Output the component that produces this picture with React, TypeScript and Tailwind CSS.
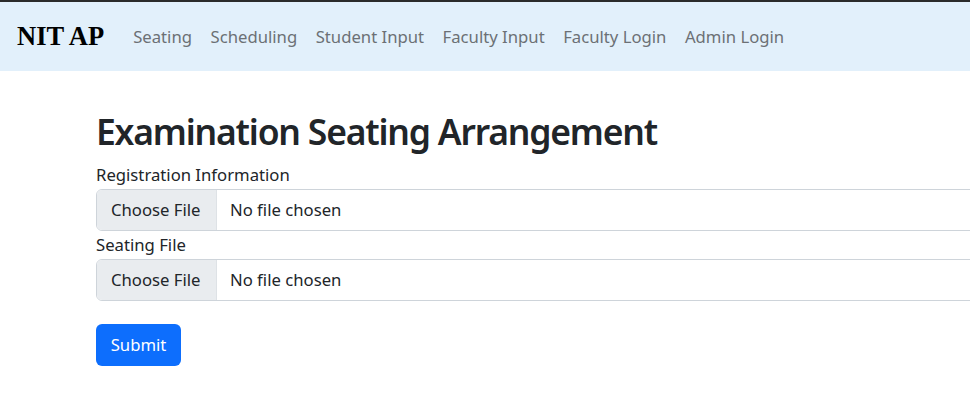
export default function App() {
  const sans = { fontFamily: '"Noto Sans", "Open Sans", sans-serif' };
  const links = ["Seating", "Scheduling", "Student Input", "Faculty Input", "Faculty Login", "Admin Login"];
  const FileInput = () => (
    <div className="flex h-[42px] w-[1000px] rounded-[6px] border border-[#ced4da] overflow-hidden">
      <div className="flex items-center w-[120px] pl-[14px] bg-[#e9ecef] border-r border-[#dee2e6] text-[16.7px] text-[#212529]">Choose File</div>
      <div className="flex items-center pl-[13px] text-[16.7px] text-[#212529]">No file chosen</div>
    </div>
  );
  return (
    <div className="w-[970px] h-[417px] overflow-hidden bg-white" style={sans}>
      <div className="h-[2px] bg-[#2b2b2b]" />
      <nav className="h-[69px] bg-[#e2f0fb] flex items-center">
        <span className="ml-[17px] text-[26.5px] font-bold text-black leading-none" style={{ fontFamily: '"Liberation Serif", serif' }}>NIT AP</span>
        <div className="flex ml-[29px] gap-[18.5px]">
          {links.map((l) => (
            <span key={l} className="text-[16.7px] text-[#6c7075]">{l}</span>
          ))}
        </div>
      </nav>
      <div className="pl-[96px] pt-[38px]">
        <h1 className="text-[35.5px] font-semibold text-[#212529] leading-[44px] tracking-[-1.2px]">Examination Seating Arrangement</h1>
        <div className="mt-[11px] text-[16.7px] text-[#212529] leading-[22px]">Registration Information</div>
        <div className="mt-[3px]"><FileInput /></div>
        <div className="mt-[3px] text-[16.7px] text-[#212529] leading-[22px]">Seating File</div>
        <div className="mt-[3px]"><FileInput /></div>
        <button className="mt-[23px] h-[42px] w-[85px] rounded-[6px] bg-[#0d6efd] text-white text-[16.7px]">Submit</button>
      </div>
    </div>
  );
}
